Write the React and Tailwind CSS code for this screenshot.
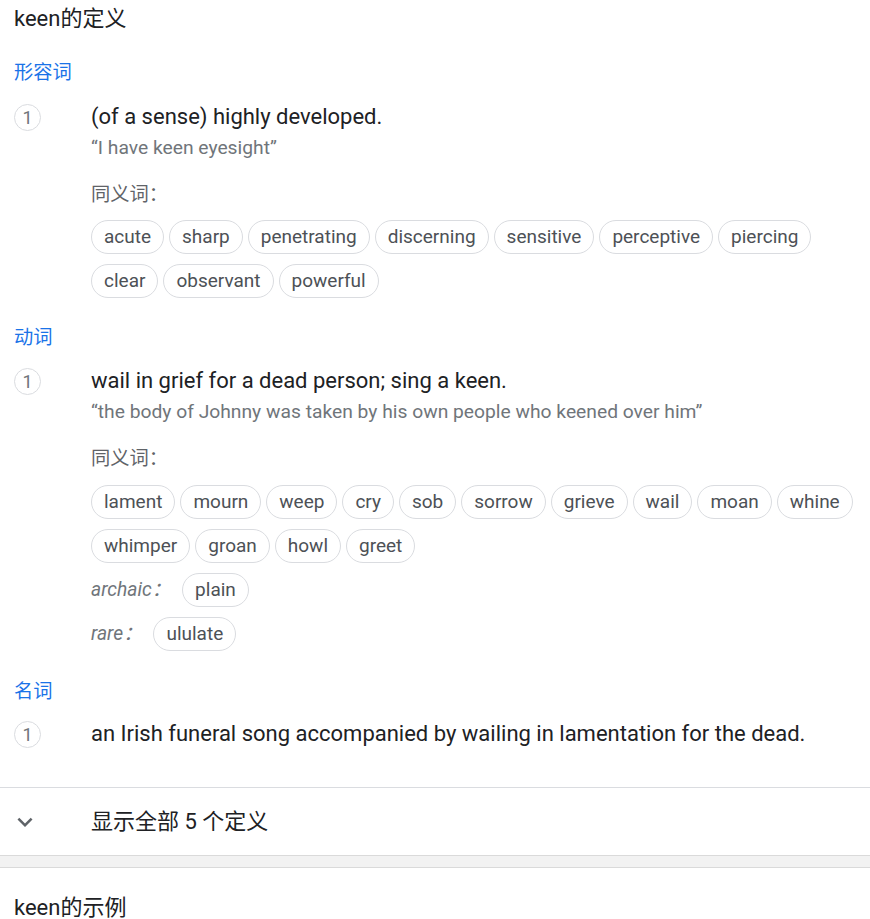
import React from "react";

const FONT = { fontFamily: 'Roboto, "Noto Sans CJK SC", sans-serif' };

function Chip({ children }) {
  return (
    <span className="h-[34px] px-[12px] flex items-center rounded-full border border-[#dadce0] text-[19px] leading-[26px] text-[#4d5156]">
      {children}
    </span>
  );
}

function Chips({ items }) {
  return (
    <div className="flex flex-wrap gap-x-[5px] gap-y-[10px]">
      {items.map((w) => (
        <Chip key={w}>{w}</Chip>
      ))}
    </div>
  );
}

function Num() {
  return (
    <div className="w-[91px] shrink-0 flex justify-start items-start pl-[14px]">
      <span className="w-[27px] h-[27px] mt-[1px] rounded-full border border-[#dadce0] flex items-center justify-center text-[18px] leading-none text-[#70757a]">
        1
      </span>
    </div>
  );
}

function Pos({ children, mt }) {
  return (
    <div className={`pl-[14px] text-[19.25px] leading-[26px] text-[#1a73e8] ${mt}`}>{children}</div>
  );
}

function LabelRow({ label, items }) {
  return (
    <div className="flex items-center">
      <span className="italic text-[19.25px] leading-[26px] text-[#70757a] mr-[11px]">{label}</span>
      <Chips items={items} />
    </div>
  );
}

export default function App() {
  return (
    <div className="w-[870px] bg-white pb-[20px]" style={FONT}>
      <div className="pl-[14px] pt-[5px] text-[22px] leading-[28px] text-[#202124]">keen的定义</div>

      <Pos mt="mt-[27px]">形容词</Pos>
      <div className="flex mt-[17px]">
        <Num />
        <div className="flex-1 pr-[14px]">
          <div className="text-[22px] leading-[28px] text-[#202124]">(of a sense) highly developed.</div>
          <div className="mt-[4px] text-[19.25px] leading-[26px] text-[#70757a]">“I have keen eyesight”</div>
          <div className="mt-[21px] text-[19.25px] leading-[26px] text-[#5f6368]">同义词：</div>
          <div className="mt-[12px]">
            <Chips
              items={["acute", "sharp", "penetrating", "discerning", "sensitive", "perceptive", "piercing", "clear", "observant", "powerful"]}
            />
          </div>
        </div>
      </div>

      <Pos mt="mt-[27px]">动词</Pos>
      <div className="flex mt-[16px]">
        <Num />
        <div className="flex-1 pr-[14px]">
          <div className="text-[22px] leading-[28px] text-[#202124]">wail in grief for a dead person; sing a keen.</div>
          <div className="mt-[4px] text-[19.25px] leading-[26px] text-[#70757a]">
            “the body of Johnny was taken by his own people who keened over him”
          </div>
          <div className="mt-[21px] text-[19.25px] leading-[26px] text-[#5f6368]">同义词：</div>
          <div className="mt-[13px] flex flex-col gap-y-[10px]">
            <Chips
              items={["lament", "mourn", "weep", "cry", "sob", "sorrow", "grieve", "wail", "moan", "whine", "whimper", "groan", "howl", "greet"]}
            />
            <LabelRow label="archaic：" items={["plain"]} />
            <LabelRow label="rare：" items={["ululate"]} />
          </div>
        </div>
      </div>

      <Pos mt="mt-[28px]">名词</Pos>
      <div className="flex mt-[15px]">
        <Num />
        <div className="flex-1 pr-[14px]">
          <div className="text-[22px] leading-[28px] text-[#202124]">
            an Irish funeral song accompanied by wailing in lamentation for the dead.
          </div>
        </div>
      </div>

      <div className="mt-[39px] border-t border-[#dadce0] h-[68px] flex items-center">
        <div className="w-[91px] shrink-0 pl-[10px] flex items-center">
          <svg width="30" height="30" viewBox="0 0 24 24" fill="#5f6368">
            <path d="M7.41 8.59L12 13.17l4.59-4.58L18 10l-6 6-6-6 1.41-1.41z" />
          </svg>
        </div>
        <div className="text-[22px] leading-[28px] text-[#202124]">显示全部 5 个定义</div>
      </div>

      <div className="h-[13px] bg-[#f2f2f2] border-y border-[#dadada]"></div>

      <div className="pl-[14px] mt-[26px] text-[22px] leading-[28px] text-[#202124]">keen的示例</div>
    </div>
  );
}
